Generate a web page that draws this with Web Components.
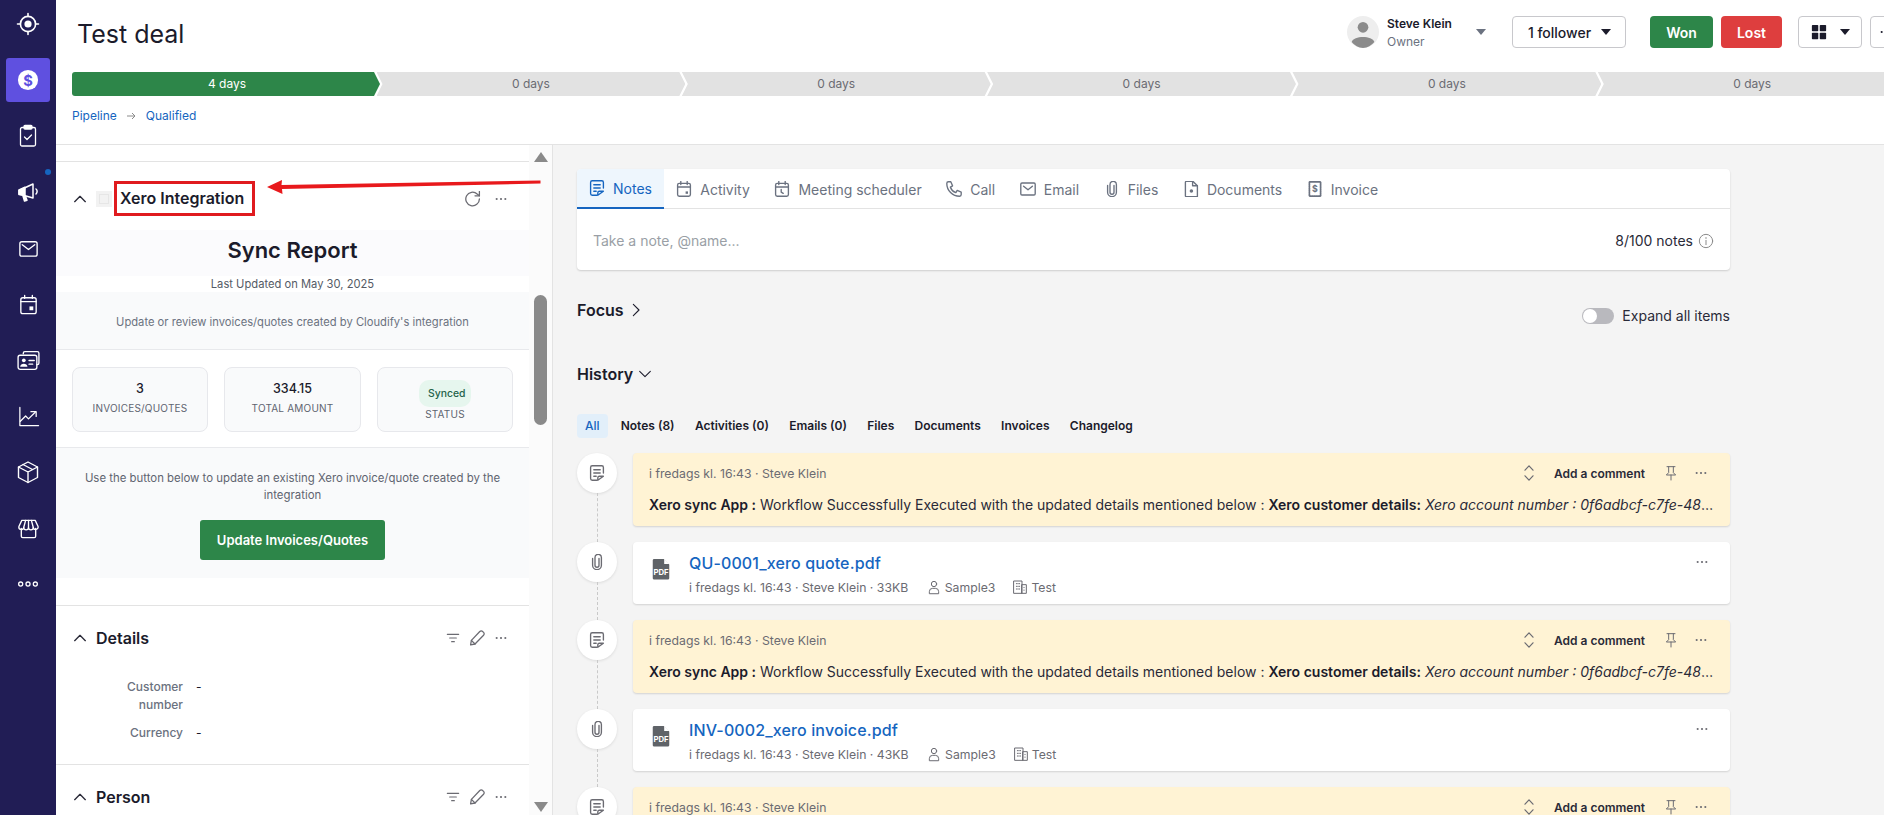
<!DOCTYPE html>
<html lang="en">
<head>
<meta charset="utf-8">
<title>Test deal</title>
<style>
    html,body{margin:0;padding:0;height:815px;overflow:hidden;background:#fff;}
    body{font-family:Inter,"Noto Sans",sans-serif;font-size:14px;color:#1b1b2b;}
    b{font-weight:600;}
</style>
</head>
<body>
<deal-page></deal-page>

<script>
const ICONS = {
    target: '<circle cx="12" cy="12" r="7.6" fill="none"/><circle cx="12" cy="12" r="3.6" fill="currentColor" stroke="none"/><path d="M12 1.5v3M12 19.5v3M1.5 12h3M19.5 12h3"/>',
    dollar: '<circle cx="12" cy="12" r="11" fill="#fff" stroke="none"/><text x="12" y="18" text-anchor="middle" font-size="16" font-weight="700" fill="#5f50e0" stroke="none" font-family="Inter">$</text>',
    clipboard: '<rect x="4.5" y="3.5" width="15" height="18.5" rx="1.5"/><rect x="8" y="1.5" width="8" height="3.5" rx="1" fill="currentColor"/><path d="M8.5 13l2.500 2.500 4.500-4.500"/>',
    megaphone: '<path d="M3 10.500 17 4v14L3 14z" fill="none"/><path d="M3 10l6-2.800v8.300L3 14.500z" fill="currentColor"/><path d="M7 16l1.500 5 2.500-.8-1.500-4z" fill="currentColor"/><path d="M20 9c1.500 1 1.500 3.500 0 5"/>',
    mail: '<rect x="3" y="5" width="18" height="15" rx="2"/><path d="M5.500 8l6.500 5 6.500-5"/>',
    calendar: '<rect x="4" y="5" width="16" height="16.500" rx="2"/><path d="M8 2.500v3M16 2.500v3M4 9h16"/><rect x="13" y="14" width="4" height="4" fill="currentColor" stroke="none"/>',
    cards: '<path d="M7 5.500V5a1.500 1.500 0 0 1 1.500-1.500h12A1.500 1.500 0 0 1 22 5v9.500a1.500 1.500 0 0 1-1.500 1.500H20"/><rect x="2" y="7" width="18" height="13.500" rx="2"/><circle cx="7.500" cy="11.800" r="1.800" fill="currentColor" stroke="none"/><path d="M4 18c0-4 7-4 7 0z" fill="currentColor" stroke="none"/><path d="M12.500 12h5M12.500 15.500h3.500"/>',
    chart: '<path d="M3 2.500V21.500H22.500"/><path d="M3.500 17l5.500-5.500 3 3 7-7"/><path d="M14.500 7H20v5"/>',
    box: '<path d="M12 2 21.500 7v10.500L12 22.500 2.500 17.500V7z"/><path d="M2.500 7 12 12l9.500-5M12 12v10.500M7 4.500 16.500 9.500"/>',
    store: '<path d="M4.500 12v8a1.500 1.500 0 0 0 1.500 1.500h12a1.500 1.500 0 0 0 1.500-1.500v-8"/><path d="M5 3.500h14l3 6.500a2.500 2.500 0 0 1-5 1 2.500 2.500 0 0 1-5 0 2.500 2.500 0 0 1-5 0 2.500 2.500 0 0 1-5-1z"/><path d="M9 3.500 7 11M15 3.500l2 7.500M12 3.500V11"/>',
    rings: '<circle cx="4" cy="12" r="2.200"/><circle cx="12" cy="12" r="2.200"/><circle cx="20" cy="12" r="2.200"/>',
    notes: '<path d="M20 12V5a2 2 0 0 0-2-2H6a2 2 0 0 0-2 2v14a2 2 0 0 0 2 2h6"/><path d="M8 8h8M8 12h8M8 16h3"/><path d="M13 21v-3a2 2 0 0 1 2-2h5z"/>',
    cal: '<rect x="4" y="5" width="16" height="16" rx="2"/><path d="M8 2.500v4M16 2.500v4M4 9.500h16"/><rect x="14" y="15" width="3" height="3" fill="currentColor" stroke="none"/>',
    calclock: '<rect x="4" y="5" width="16" height="16" rx="2"/><path d="M8 2.500v4M16 2.500v4M4 9.500h16M11 12.500V16l2.500 1.500"/>',
    phone: '<path d="M5 3h3l2.200 5-2.700 1.700a11 11 0 0 0 6.800 6.800L16 13.800l5 2.200v3a2 2 0 0 1-2 2A16 16 0 0 1 3 5a2 2 0 0 1 2-2"/>',
    envelope: '<rect x="3" y="4.500" width="18" height="15" rx="1.500"/><path d="M6.500 8.500l5.500 4.500 5.500-4.500"/>',
    clip: '<path d="M6.500 7.500V16a5.500 5.500 0 0 0 11 0V6.500a4 4 0 0 0-8 0V16a2.500 2.500 0 0 0 5 0V7.500"/>',
    doc: '<path d="M6 2.500h8.500L20 8v13.500H6a1 1 0 0 1-1-1v-17a1 1 0 0 1 1-1z"/><path d="M14 2.500V8h6"/><circle cx="12.500" cy="14.500" r="2.200" fill="currentColor" stroke="none"/>',
    invoice: '<rect x="5" y="3" width="14" height="18" rx="1" stroke-width="2.200" stroke-dasharray="1.500 1.100"/><text x="12" y="16" text-anchor="middle" font-size="11" font-weight="700" fill="currentColor" stroke="none" font-family="Inter">$</text>',
    person: '<circle cx="12" cy="7.500" r="4"/><path d="M5 21.500v-2.500a5 5 0 0 1 5-5h4a5 5 0 0 1 5 5v2.500z"/>',
    building: '<rect x="3" y="3" width="12" height="18.500"/><rect x="15" y="8.500" width="6.500" height="13"/><path d="M6.500 7h1.500M10 7h1.500M6.500 11h1.500M10 11h1.500M6.500 15h1.500M10 15h1.500M18 12.500v.500M18 16.500v.500"/>',
    pin: '<path d="M6 2.500h12M8.500 2.500v9L5 15h14l-3.500-3.500v-9M12 15v7.500"/>',
    expand: '<path d="M7 8.500 12 3l5 5.500M7 15.500l5 5.500 5-5.500"/>',
    dots: '<circle cx="5.500" cy="12" r="1.600" fill="currentColor" stroke="none"/><circle cx="12" cy="12" r="1.600" fill="currentColor" stroke="none"/><circle cx="18.500" cy="12" r="1.600" fill="currentColor" stroke="none"/>',
    refresh: '<path d="M20 12a8.500 8.500 0 1 1-2.800-6.300L20 8"/><path d="M20 2.500V8h-5.500"/>',
    filter: '<path d="M3.500 6.500h17M7 12h10M10 17.500h4"/>',
    pencil: '<path d="M4 20.500l1-5.500L15.500 3.800a2.400 2.400 0 0 1 3.500 0l1.200 1.200a2.400 2.400 0 0 1 0 3.500L9.500 19.500z"/><path d="M5 15l4.500 4.500"/>',
    up: '<path d="M4 16l8-8 8 8"/>',
    down: '<path d="M4 8l8 8 8-8"/>',
    right: '<path d="M8 3.500l8.500 8.500L8 20.500"/>',
    info: '<circle cx="12" cy="12" r="10"/><path d="M12 11v6.500"/><circle cx="12" cy="7.500" r="1.200" fill="currentColor" stroke="none"/>',
    grid: '<rect x="2.500" y="2.500" width="8.500" height="8.500" rx="1" fill="currentColor" stroke="none"/><rect x="13" y="2.500" width="8.500" height="8.500" rx="1" fill="currentColor" stroke="none"/><rect x="2.500" y="13" width="8.500" height="8.500" rx="1" fill="currentColor" stroke="none"/><rect x="13" y="13" width="8.500" height="8.500" rx="1" fill="currentColor" stroke="none"/>',
    pdf: '<path d="M5 1h10l6 6v15a1.500 1.500 0 0 1-1.500 1.500h-15A1.500 1.500 0 0 1 3 22V2.500A1.500 1.500 0 0 1 4.500 1z" fill="#5f6368" stroke="none"/><path d="M15.500 1l5.500 5.500h-5.500z" fill="#fff" stroke="none"/><text x="12" y="19" text-anchor="middle" font-size="8.500" font-weight="700" fill="#fff" stroke="none" font-family="Inter">PDF</text>',
    avatar: '<circle cx="12" cy="12" r="12" fill="#eeeeee" stroke="none"/><circle cx="12" cy="8.500" r="4" fill="#8b8b8b" stroke="none"/><path d="M3.500 19.500C5 14.500 19 14.500 20.500 19.500A12 12 0 0 1 12 24a12 12 0 0 1-8.500-4.500z" fill="#8b8b8b" stroke="none"/>'
};
// these read larger in the reference, so crop their box
const TIGHT = ['notes', 'cal', 'calclock', 'phone', 'envelope', 'clip', 'doc', 'invoice', 'expand', 'refresh', 'pencil'];

class xicon extends HTMLElement {
    connectedCallback() {
        const name = this.getAttribute('name');
        const size = this.getAttribute('size') || 16;
        const sw = this.getAttribute('sw') || 1.7;
        const box = TIGHT.includes(name) ? '2 2 20 20' : '0 0 24 24';
        this.attachShadow({ mode: 'open' }).innerHTML = `
            <style>:host{display:inline-flex;flex:none;width:${size}px;height:${size}px;}svg{display:block;width:100%;height:100%;}</style>
            <svg viewBox="${box}" fill="none" stroke="currentColor" stroke-width="${sw}" stroke-linecap="round" stroke-linejoin="round">${ICONS[name] || ''}</svg>`;
    }
}
customElements.define('x-icon', xicon);

const rail_tpl = document.createElement('template');
rail_tpl.innerHTML = `
    <style>
        :host{display:flex;flex-direction:column;flex:none;width:56px;height:815px;background:#211d55;color:#fff;}
        .item{height:56px;flex:none;display:flex;align-items:center;justify-content:center;position:relative;}
        .item.first{height:52px;padding-bottom:4px;box-sizing:border-box;}
        .on{width:44px;height:44px;border-radius:3px;background:#5f50e0;display:flex;align-items:center;justify-content:center;}
        .dot{position:absolute;left:45px;top:5px;width:6px;height:6px;border-radius:50%;background:#1565c0;}
    </style>
    <div class="item first"><x-icon name="target" size="24" sw="1.6"></x-icon></div>
    <div class="item"><span class="on"><x-icon name="dollar" size="22"></x-icon></span></div>
    <div class="item"><x-icon name="clipboard" size="24" sw="1.3"></x-icon></div>
    <div class="item"><span class="dot"></span><x-icon name="megaphone" size="24" sw="1.5"></x-icon></div>
    <div class="item"><x-icon name="mail" size="23" sw="1.4"></x-icon></div>
    <div class="item"><x-icon name="calendar" size="23" sw="1.4"></x-icon></div>
    <div class="item"><x-icon name="cards" size="25" sw="1.3"></x-icon></div>
    <div class="item"><x-icon name="chart" size="23" sw="1.3"></x-icon></div>
    <div class="item"><x-icon name="box" size="24" sw="1.4"></x-icon></div>
    <div class="item"><x-icon name="store" size="23" sw="1.4"></x-icon></div>
    <div class="item"><x-icon name="rings" size="22" sw="1.4"></x-icon></div>
`;
class apprail extends HTMLElement {
    constructor() {
        super();
        this.attachShadow({ mode: 'open' });
        this.shadowRoot.appendChild(rail_tpl.content.cloneNode(true));
    }
}
customElements.define('app-rail', apprail);

const head_tpl = document.createElement('template');
head_tpl.innerHTML = `
    <style>
        :host{display:block;flex:none;height:145px;box-sizing:border-box;border-bottom:1px solid #e3e3e3;background:#fff;padding:16px 18px 0 16px;}
        .top{display:flex;align-items:center;height:32px;}
        h1{margin:4px 0 0 5px;font-size:25px;font-weight:400;line-height:32px;flex:1;color:#1b1b2b;}
        .owner{display:flex;align-items:center;gap:8px;width:139px;margin-right:26px;}
        .who{width:87px;font-size:12px;line-height:18px;padding-top:2px;}
        .who b{display:block;color:#1b1b2b;font-weight:600;}
        .who span{display:block;color:#6b7280;}
        .caret{width:0;height:0;border:5px solid transparent;border-top:6px solid currentColor;border-bottom:0;flex:none;}
        .owner .caret{color:#6b7280;margin-left:-1px;}
        button{font:inherit;height:32px;box-sizing:border-box;border-radius:4px;border:1px solid #c8c8cc;background:#fff;color:#1b1b2b;display:flex;align-items:center;justify-content:center;padding:0;font-weight:500;}
        .fol{width:114px;gap:10px;padding-left:1px;}
        .won,.lost{color:#fff;font-weight:600;border:0;}
        .won{background:#2d8649;width:63px;margin-left:24px;}
        .lost{background:#de3e3e;width:61px;margin-left:8px;}
        .grid{width:64px;margin-left:16px;gap:12px;}
        .more{width:32px;margin-left:8px;}
        .crumb{display:flex;align-items:center;gap:9.500px;font-size:12px;color:#1565c0;margin-top:11px;line-height:18px;}
    </style>
    <div class="top">
        <h1>Test deal</h1>
        <div class="owner">
            <x-icon name="avatar" size="32"></x-icon>
            <div class="who"><b>Steve Klein</b><span>Owner</span></div>
            <i class="caret"></i>
        </div>
        <button class="fol">1 follower <i class="caret"></i></button>
        <button class="won">Won</button>
        <button class="lost">Lost</button>
        <button class="grid"><x-icon name="grid" size="18"></x-icon><i class="caret"></i></button>
        <button class="more"><x-icon name="dots" size="16"></x-icon></button>
    </div>
    <slot></slot>
    <div class="crumb"><span>Pipeline</span><svg width="10" height="10" viewBox="0 0 10 10" fill="none" stroke="#8b8b8b" stroke-width="1"><path d="M1 5h8M6 2l3 3-3 3"/></svg><span>Qualified</span></div>
`;
class dealheader extends HTMLElement {
    constructor() {
        super();
        this.attachShadow({ mode: 'open' });
        this.shadowRoot.appendChild(head_tpl.content.cloneNode(true));
    }
}
customElements.define('deal-header', dealheader);

const stages_tpl = document.createElement('template');
stages_tpl.innerHTML = `
    <style>
        :host{display:flex;margin-top:24px;height:24px;}
        div{flex:none;width:308.83px;margin-left:-3.5px;height:24px;line-height:24px;text-align:center;font-size:12px;color:#6b6b72;background:#e2e2e2;
            clip-path:polygon(0 0,calc(100% - 6px) 0,100% 50%,calc(100% - 6px) 100%,0 100%,6px 50%);}
        div.first{width:308px;margin-left:0;padding-left:2px;box-sizing:border-box;background:#2d8649;color:#fff;border-radius:3px 0 0 3px;
            clip-path:polygon(0 0,calc(100% - 6px) 0,100% 50%,calc(100% - 6px) 100%,0 100%);}
    </style>
    <div class="first">4 days</div><div>0 days</div><div>0 days</div><div>0 days</div><div>0 days</div><div>0 days</div>
`;
class stagebar extends HTMLElement {
    constructor() {
        super();
        this.attachShadow({ mode: 'open' });
        this.shadowRoot.appendChild(stages_tpl.content.cloneNode(true));
    }
}
customElements.define('stage-bar', stagebar);

const section_tpl = document.createElement('template');
section_tpl.innerHTML = `
    <style>
        :host{display:block;border-bottom:1px solid #e3e3e3;}
        :host([last]){border-bottom:0;}
        .bar{display:flex;align-items:center;height:64px;padding-left:16px;padding-right:20px;box-sizing:border-box;}
        .t{flex:1;margin-left:8px;font-size:16px;font-weight:600;color:#1b1b2b;}
        .acts{display:flex;align-items:center;gap:8px;color:#6b6b72;}
        .chev{color:#2a2a38;}
    </style>
    <div class="bar">
        <x-icon class="chev" name="up" size="16" sw="2"></x-icon>
        <div class="t"><slot name="title"></slot></div>
        <div class="acts"><x-icon name="filter" size="16" sw="1.8"></x-icon><x-icon name="pencil" size="16" sw="1.6"></x-icon><x-icon name="dots" size="16"></x-icon></div>
    </div>
    <slot></slot>
`;
class panelsection extends HTMLElement {
    constructor() {
        super();
        this.attachShadow({ mode: 'open' });
        this.shadowRoot.appendChild(section_tpl.content.cloneNode(true));
    }
}
customElements.define('panel-section', panelsection);

const fields_tpl = document.createElement('template');
fields_tpl.innerHTML = `
    <style>
        :host{display:grid;grid-template-columns:88px 1fr;column-gap:13px;row-gap:10px;padding:8px 0 22px 39px;font-size:12px;line-height:18px;}
        .k{text-align:right;color:#6b7280;font-weight:500;}
        .v{color:#1b1b2b;}
    </style>
    <div class="k">Customer number</div><div class="v">-</div>
    <div class="k">Currency</div><div class="v">-</div>
`;
class detailfields extends HTMLElement {
    constructor() {
        super();
        this.attachShadow({ mode: 'open' });
        this.shadowRoot.appendChild(fields_tpl.content.cloneNode(true));
    }
}
customElements.define('detail-fields', detailfields);

const stat_tpl = document.createElement('template');
stat_tpl.innerHTML = `
    <style>
        :host{display:flex;flex-direction:column;align-items:center;box-sizing:border-box;height:65px;padding-top:12px;background:#f9fafb;border:1px solid #e7e8ec;border-radius:8px;}
        .n{font-size:12.500px;font-weight:500;line-height:18px;color:#1b1b2b;}
        .l{margin-top:2px;font-size:10px;line-height:16px;color:#5f6470;letter-spacing:.2px;}
    </style>
    <div class="n"><slot></slot></div>
    <div class="l"><slot name="label"></slot></div>
`;
class statcard extends HTMLElement {
    constructor() {
        super();
        this.attachShadow({ mode: 'open' });
        this.shadowRoot.appendChild(stat_tpl.content.cloneNode(true));
    }
}
customElements.define('stat-card', statcard);

const sync_tpl = document.createElement('template');
sync_tpl.innerHTML = `
    <style>
        :host{display:block;border-bottom:1px solid #e3e3e3;}
        .bar{display:flex;align-items:center;height:68px;box-sizing:border-box;padding:19px 20px 14px 16px;}
        .bar .chev{color:#2a2a38;}
        .ph{width:16px;height:16px;background:#f2f2f2;margin-left:8px;flex:none;display:flex;align-items:center;justify-content:center;}
        .ph i{width:8px;height:8px;border:1px solid #e6e6e6;}
        .t{margin-left:2px;height:35px;box-sizing:border-box;border:3px solid #e01b1f;display:flex;align-items:center;padding:0 3px 2px;font-size:16px;font-weight:600;color:#1b1b2b;width:141px;}
        .acts{margin-left:auto;display:flex;align-items:center;gap:12px;color:#6b6b72;}
        .hero{height:62px;background:#fbfbfd;text-align:center;box-sizing:border-box;padding-top:4px;}
        .hero h2{margin:0;font-size:22px;line-height:32px;font-weight:600;color:#1b1b2b;}
        .hero p{margin:10px 0 0;font-size:11.200px;line-height:16px;color:#555b66;background:#fff;}
        .intro{height:58px;box-sizing:border-box;background:#f9fafb;border-bottom:1px solid #e8e9ec;text-align:center;font-size:11.200px;line-height:60px;color:#6b7280;}
        .stats{display:grid;grid-template-columns:136px 137px 136px;gap:16px;padding:17px 16px 0;height:98px;box-sizing:border-box;border-bottom:1px solid #e8e9ec;background:#fff;}
        .pill{display:block;padding:0 9px;height:27px;line-height:27px;border-radius:10px;background:#e6f6ee;color:#24634a;font-size:10.400px;font-weight:500;margin:0 0 -3px;width:34px;text-align:center;box-sizing:content-box;}
        .act{background:#f9fafb;height:130px;text-align:center;box-sizing:border-box;padding:22px 16px 0;font-size:11.400px;line-height:17px;color:#5f6470;}
        button{display:block;margin:16px auto 0;width:185px;height:40px;border:0;border-radius:3px;background:#2d8649;color:#fff;font:inherit;font-size:13px;font-weight:600;}
        .gap{height:27px;background:#fff;}
    </style>
    <div class="bar">
        <x-icon class="chev" name="up" size="16" sw="2"></x-icon>
        <span class="ph"><i></i></span>
        <div class="t">Xero Integration</div>
        <div class="acts"><x-icon name="refresh" size="16" sw="1.6"></x-icon><x-icon name="dots" size="16"></x-icon></div>
    </div>
    <div class="hero">
        <h2>Sync Report</h2>
        <p>Last Updated on May 30, 2025</p>
    </div>
    <div class="intro">Update or review invoices/quotes created by Cloudify's integration</div>
    <div class="stats">
        <stat-card>3<span slot="label">INVOICES/QUOTES</span></stat-card>
        <stat-card>334.15<span slot="label">TOTAL AMOUNT</span></stat-card>
        <stat-card><span class="pill">Synced</span><span slot="label">STATUS</span></stat-card>
    </div>
    <div class="act">
        Use the button below to update an existing Xero invoice/quote created by the integration
        <button>Update Invoices/Quotes</button>
    </div>
    <div class="gap"></div>
`;
class xerosync extends HTMLElement {
    constructor() {
        super();
        this.attachShadow({ mode: 'open' });
        this.shadowRoot.appendChild(sync_tpl.content.cloneNode(true));
    }
}
customElements.define('xero-sync', xerosync);

const side_tpl = document.createElement('template');
side_tpl.innerHTML = `
    <style>
        :host{display:flex;flex:none;width:497px;height:670px;box-sizing:border-box;border-right:1px solid #e3e3e3;background:#fff;overflow:hidden;}
        .body{width:473px;flex:none;}
        .spacer{height:16px;border-bottom:1px solid #e3e3e3;}
        .track{flex:1;background:#fbfbfb;display:flex;flex-direction:column;align-items:center;padding-top:7px;}
        .u,.d{width:0;height:0;border:7px solid transparent;border-top:0;border-bottom:10px solid #8a8a8a;}
        .d{border-bottom:0;border-top:10px solid #8a8a8a;margin-top:377px;}
        .thumb{width:13px;height:130px;background:#8a8a8a;border-radius:7px;margin-top:133px;}
    </style>
    <div class="body">
        <div class="spacer"></div>
        <xero-sync></xero-sync>
        <panel-section><span slot="title">Details</span><detail-fields></detail-fields></panel-section>
        <panel-section last><span slot="title">Person</span></panel-section>
    </div>
    <div class="track"><i class="u"></i><i class="thumb"></i><i class="d"></i></div>
`;
class sidepanel extends HTMLElement {
    constructor() {
        super();
        this.attachShadow({ mode: 'open' });
        this.shadowRoot.appendChild(side_tpl.content.cloneNode(true));
    }
}
customElements.define('side-panel', sidepanel);

const composer_tpl = document.createElement('template');
composer_tpl.innerHTML = `
    <style>
        :host{display:block;height:101px;background:#fff;border-radius:4px;box-shadow:0 1px 2px rgba(0,0,0,.16);}
        .tabs{display:flex;height:40px;box-sizing:border-box;border-bottom:1px solid #e3e3e3;}
        .tab{display:flex;align-items:center;gap:8px;padding:0 12.300px;height:40px;box-sizing:border-box;color:#6b7280;}
        .tab.on{color:#1565c0;background:#eef6fd;border-bottom:2px solid #1565c0;border-top-left-radius:4px;padding:0 12px;}
        .row{display:flex;align-items:center;justify-content:space-between;height:61px;padding:2px 16px 0;box-sizing:border-box;}
        .ph{color:#9a9fa6;}
        .cnt{display:flex;align-items:center;gap:5px;color:#2a2a38;}
        .cnt x-icon{color:#8b8b8b;}
    </style>
    <div class="tabs">
        <div class="tab on"><x-icon name="notes"></x-icon>Notes</div>
        <div class="tab"><x-icon name="cal"></x-icon>Activity</div>
        <div class="tab"><x-icon name="calclock"></x-icon>Meeting scheduler</div>
        <div class="tab"><x-icon name="phone"></x-icon>Call</div>
        <div class="tab"><x-icon name="envelope"></x-icon>Email</div>
        <div class="tab"><x-icon name="clip"></x-icon>Files</div>
        <div class="tab"><x-icon name="doc"></x-icon>Documents</div>
        <div class="tab"><x-icon name="invoice"></x-icon>Invoice</div>
    </div>
    <div class="row">
        <span class="ph">Take a note, @name...</span>
        <span class="cnt">8/100 notes<x-icon name="info" sw="1.5"></x-icon></span>
    </div>
`;
class notecomposer extends HTMLElement {
    constructor() {
        super();
        this.attachShadow({ mode: 'open' });
        this.shadowRoot.appendChild(composer_tpl.content.cloneNode(true));
    }
}
customElements.define('note-composer', notecomposer);

const filters_tpl = document.createElement('template');
filters_tpl.innerHTML = `
    <style>
        :host{display:flex;align-items:center;height:24px;font-size:12px;font-weight:600;color:#1b1b2b;}
        span{padding:0 10.150px;line-height:24px;}
        .on{background:#e2effa;color:#1565c0;border-radius:4px;padding:0 8px;margin-right:3px;font-weight:500;}
    </style>
    <span class="on">All</span><span>Notes (8)</span><span>Activities (0)</span><span>Emails (0)</span><span>Files</span><span>Documents</span><span>Invoices</span><span>Changelog</span>
`;
class historyfilters extends HTMLElement {
    constructor() {
        super();
        this.attachShadow({ mode: 'open' });
        this.shadowRoot.appendChild(filters_tpl.content.cloneNode(true));
    }
}
customElements.define('history-filters', historyfilters);

const row_tpl = document.createElement('template');
row_tpl.innerHTML = `
    <style>
        :host{display:flex;gap:16px;align-items:stretch;}
        .rail{width:40px;flex:none;display:flex;flex-direction:column;align-items:center;margin-bottom:-16px;}
        .circle{width:40px;height:40px;flex:none;border-radius:50%;background:#fff;box-shadow:0 1px 3px rgba(0,0,0,.1);display:flex;align-items:center;justify-content:center;color:#6b6b72;}
        .line{flex:1;border-left:1px dashed #c9c9c9;}
        .card{flex:1;min-width:0;}
    </style>
    <div class="rail"><div class="circle"><x-icon></x-icon></div><div class="line"></div></div>
    <div class="card"><slot></slot></div>
`;
class historyrow extends HTMLElement {
    constructor() {
        super();
        this.attachShadow({ mode: 'open' });
        const copy = row_tpl.content.cloneNode(true);
        copy.querySelector('x-icon').setAttribute('name', this.getAttribute('icon') || 'notes');
        this.shadowRoot.appendChild(copy);
    }
}
customElements.define('history-row', historyrow);

const note_tpl = document.createElement('template');
note_tpl.innerHTML = `
    <style>
        :host{display:block;height:73px;box-sizing:border-box;padding:12px 16px;background:#fff3d4;border-radius:4px;box-shadow:0 1px 2px rgba(0,0,0,.14);}
        .meta{display:flex;align-items:center;height:16px;font-size:12.250px;color:#6b6b72;}
        .acts{margin-left:auto;display:flex;align-items:center;}
        .acts b{font-weight:600;color:#2a2a38;margin:0 18px 0 17px;font-size:12px;}
        .acts .dots{margin-left:14px;margin-right:5px;}
        .body{margin-top:14px;line-height:20px;white-space:nowrap;overflow:hidden;text-overflow:ellipsis;color:#2a2a38;}
        .body b{font-weight:600;color:#1b1b2b;}
    </style>
    <div class="meta">
        <span>i fredags kl. 16:43 · Steve Klein</span>
        <span class="acts"><x-icon name="expand" sw="1.5"></x-icon><b>Add a comment</b><x-icon name="pin" sw="1.5"></x-icon><x-icon class="dots" name="dots"></x-icon></span>
    </div>
    <div class="body"><b>Xero sync App :</b> Workflow Successfully Executed with the updated details mentioned below : <b>Xero customer details:</b> <i>Xero account number : 0f6adbcf-c7fe-48d2-9a4e-71c3be20d915 Xero account name : Sample3</i></div>
`;
class notecard extends HTMLElement {
    constructor() {
        super();
        this.attachShadow({ mode: 'open' });
        this.shadowRoot.appendChild(note_tpl.content.cloneNode(true));
    }
}
customElements.define('note-card', notecard);

const file_tpl = document.createElement('template');
file_tpl.innerHTML = `
    <style>
        :host{display:flex;align-items:flex-start;height:62px;box-sizing:border-box;padding:8px 24px 0 17px;background:#fff;border-radius:4px;box-shadow:0 1px 2px rgba(0,0,0,.14);}
        .pdf{margin:8px 17px 0 0;color:#5f6368;}
        .main{flex:1;}
        .name{font-size:16px;line-height:24px;font-weight:500;color:#1565c0;letter-spacing:.13px;padding-top:1px;height:23px;}
        .meta{display:flex;align-items:center;margin-top:5px;height:16px;font-size:12.250px;color:#6b6b72;}
        .meta x-icon{margin-right:3px;}
        .meta .s1{margin-left:17.500px;}
        .meta .s2{margin-left:17px;}
        .dots{margin-top:4px;color:#6b6b72;margin-right:-4px;}
    </style>
    <x-icon class="pdf" name="pdf" size="22"></x-icon>
    <div class="main">
        <div class="name"><slot></slot></div>
        <div class="meta"><span>i fredags kl. 16:43 · Steve Klein · <slot name="size"></slot></span><x-icon class="s1" name="person" sw="1.5"></x-icon><span>Sample3</span><x-icon class="s2" name="building" sw="1.5"></x-icon><span>Test</span></div>
    </div>
    <x-icon class="dots" name="dots"></x-icon>
`;
class filecard extends HTMLElement {
    constructor() {
        super();
        this.attachShadow({ mode: 'open' });
        this.shadowRoot.appendChild(file_tpl.content.cloneNode(true));
    }
}
customElements.define('file-card', filecard);

const feed_tpl = document.createElement('template');
feed_tpl.innerHTML = `
    <style>
        :host{display:block;flex:none;width:1153px;margin-left:24px;padding-top:24px;}
        .sec{display:flex;align-items:center;gap:4px;font-size:16px;font-weight:600;color:#1b1b2b;line-height:24px;}
        .focus{display:flex;justify-content:space-between;align-items:flex-start;margin-top:28px;height:64px;}
        .toggle{display:flex;align-items:center;gap:8px;margin-top:9px;color:#2a2a38;}
        .sw{width:32px;height:16px;border-radius:8px;background:#b9b9be;display:flex;align-items:center;padding-left:1px;box-sizing:border-box;}
        .sw i{width:14px;height:14px;border-radius:50%;background:#fff;}
        history-filters{margin-top:28px;}
        .list{display:flex;flex-direction:column;gap:16px;margin-top:15px;}
    </style>
    <note-composer></note-composer>
    <div class="focus">
        <div class="sec">Focus <x-icon name="right" size="16" sw="1.6"></x-icon></div>
        <div class="toggle"><span class="sw"><i></i></span>Expand all items</div>
    </div>
    <div class="sec">History <x-icon name="down" size="16" sw="1.6"></x-icon></div>
    <history-filters></history-filters>
    <div class="list">
        <history-row icon="notes"><note-card></note-card></history-row>
        <history-row icon="clip"><file-card>QU-0001_xero quote.pdf<span slot="size">33KB</span></file-card></history-row>
        <history-row icon="notes"><note-card></note-card></history-row>
        <history-row icon="clip"><file-card>INV-0002_xero invoice.pdf<span slot="size">43KB</span></file-card></history-row>
        <history-row icon="notes"><note-card></note-card></history-row>
    </div>
`;
class historyfeed extends HTMLElement {
    constructor() {
        super();
        this.attachShadow({ mode: 'open' });
        this.shadowRoot.appendChild(feed_tpl.content.cloneNode(true));
    }
}
customElements.define('history-feed', historyfeed);

const arrow_tpl = document.createElement('template');
arrow_tpl.innerHTML = `
    <style>:host{position:absolute;left:260px;top:170px;width:290px;height:30px;pointer-events:none;}svg{display:block;}</style>
    <svg width="290" height="30" viewBox="0 0 290 30"><path d="M7 17 22 10l-.500 5 259-4.500v3L22 19l.500 5z" fill="#e8191c"/></svg>
`;
class redarrow extends HTMLElement {
    constructor() {
        super();
        this.attachShadow({ mode: 'open' });
        this.shadowRoot.appendChild(arrow_tpl.content.cloneNode(true));
    }
}
customElements.define('red-arrow', redarrow);

const page_tpl = document.createElement('template');
page_tpl.innerHTML = `
    <style>
        :host{display:flex;width:1920px;height:815px;overflow:hidden;position:relative;}
        main{flex:1;min-width:0;display:flex;flex-direction:column;}
        .split{display:flex;flex:1;min-height:0;background:#f4f4f4;overflow:hidden;}
    </style>
    <app-rail></app-rail>
    <main>
        <deal-header><stage-bar></stage-bar></deal-header>
        <div class="split">
            <side-panel></side-panel>
            <history-feed></history-feed>
        </div>
    </main>
    <red-arrow></red-arrow>
`;
class dealpage extends HTMLElement {
    constructor() {
        super();
        this.attachShadow({ mode: 'open' });
        this.shadowRoot.appendChild(page_tpl.content.cloneNode(true));
    }
}
customElements.define('deal-page', dealpage);
</script>
</body>
</html>
